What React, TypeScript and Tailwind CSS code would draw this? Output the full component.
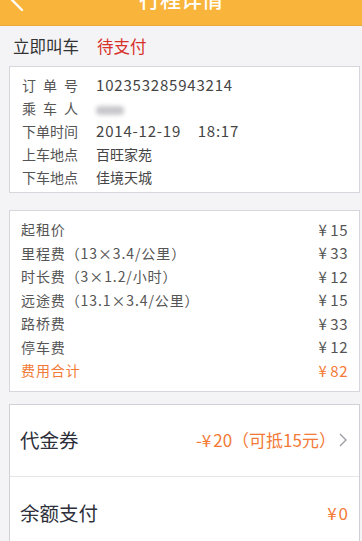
import React from "react";

const font = { fontFamily: '"Noto Sans CJK SC", "Noto Sans", sans-serif' };

function InfoRow({ label, children, spaced }: { label: string; children: React.ReactNode; spaced?: boolean }) {
  return (
    <div className="flex h-[23px] items-center">
      <div
        className={
          "w-[74px] shrink-0 text-[14px] text-[#555] " + (spaced ? "tracking-[7px]" : "")
        }
      >
        {label}
      </div>
      <div className="text-[14px] text-[#444]">{children}</div>
    </div>
  );
}

function FeeRow({ label, value, highlight }: { label: string; value: string; highlight?: boolean }) {
  return (
    <div
      className={
        "flex h-[23.5px] items-center justify-between text-[14px] " +
        (highlight ? "text-[#f27a36]" : "text-[#555]")
      }
    >
      <span className="tracking-[0.9px]">{label}</span>
      <span className="text-[15px] tracking-[0.5px]">
        <span className="mr-[3px]">¥</span>
        {value}
      </span>
    </div>
  );
}

export default function App() {
  return (
    <div className="w-[362px] h-[541px] overflow-hidden bg-[#f4f4f6]" style={font}>
      {/* header */}
      <div className="relative h-[26px] overflow-hidden bg-[#f9b53b] border-b border-[#e9a93a]">
        <svg className="absolute left-[6px] top-[-12px]" width="20" height="24" viewBox="0 0 20 24">
          <path d="M16 2 L6 12 L16 22" fill="none" stroke="#fff" strokeWidth="2.4" strokeLinecap="round" strokeLinejoin="round" />
        </svg>
        <div className="absolute left-0 right-0 top-[-17px] text-center text-[21px] font-medium text-white">
          行程详情
        </div>
      </div>

      {/* status row */}
      <div className="flex h-[40px] items-center px-[13px] text-[16.5px]">
        <span className="text-[#333]">立即叫车</span>
        <span className="ml-[18px] text-[#d8322c]">待支付</span>
      </div>

      {/* order info card */}
      <div className="ml-[9px] mr-[2px] border border-[#d6d6dc] bg-white pt-[7px] pb-[3px] pl-[12px]">
        <InfoRow label="订单号" spaced>
          <span className="text-[15px] tracking-[0.8px]">102353285943214</span>
        </InfoRow>
        <InfoRow label="乘车人" spaced>
          <span className="inline-block h-[9px] w-[28px] rounded-sm bg-[#c8c8cc] blur-[2px] align-middle" />
        </InfoRow>
        <InfoRow label="下单时间">
          <span className="text-[15px] tracking-[0.8px]">2014-12-19&nbsp;&nbsp;&nbsp;&nbsp;18:17</span>
        </InfoRow>
        <InfoRow label="上车地点">百旺家苑</InfoRow>
        <InfoRow label="下车地点">佳境天城</InfoRow>
      </div>

      {/* fees card */}
      <div className="mt-[17px] ml-[9px] mr-[2px] border border-[#d6d6dc] bg-white pt-[7px] pb-[8px] pl-[11px] pr-[11px]">
        <FeeRow label="起租价" value="15" />
        <FeeRow label="里程费（13×3.4/公里）" value="33" />
        <FeeRow label="时长费（3×1.2/小时）" value="12" />
        <FeeRow label="远途费（13.1×3.4/公里）" value="15" />
        <FeeRow label="路桥费" value="33" />
        <FeeRow label="停车费" value="12" />
        <FeeRow label="费用合计" value="82" highlight />
      </div>

      {/* payment card */}
      <div className="mt-[12px] ml-[9px] mr-[2px] border border-[#d0d0d6] bg-white">
        <div className="flex h-[72px] items-center justify-between border-b border-[#e6e6ea] pl-[10px] pr-[11px]">
          <span className="text-[19.5px] text-[#2d2f3b]">代金券</span>
          <span className="flex items-center text-[17px] text-[#f27a36]">
            -<span className="mr-[2px]">¥</span>20（可抵15元）
            <svg width="10" height="16" viewBox="0 0 10 16" className="ml-[2px]">
              <path d="M2 2 L8 8 L2 14" fill="none" stroke="#9a9aa2" strokeWidth="1.3" />
            </svg>
          </span>
        </div>
        <div className="flex h-[72px] items-center justify-between pl-[10px] pr-[11px]">
          <span className="text-[19.5px] text-[#2d2f3b]">余额支付</span>
          <span className="text-[17px] text-[#f27a36]">
            <span className="mr-[2px]">¥</span>0
          </span>
        </div>
      </div>
    </div>
  );
}
